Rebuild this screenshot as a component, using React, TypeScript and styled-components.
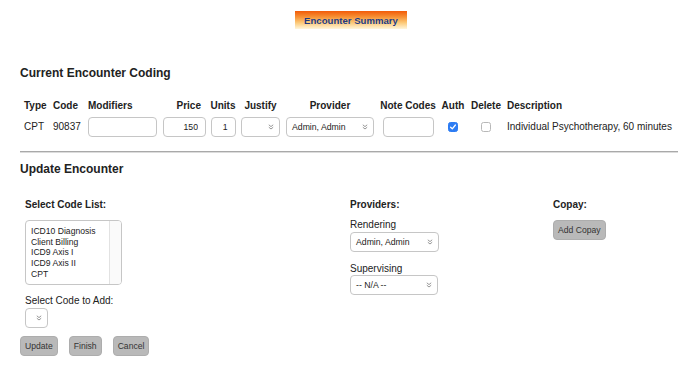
import React from "react";
import styled, { createGlobalStyle } from "styled-components";

const GlobalStyle = createGlobalStyle`
  html, body { margin: 0; padding: 0; background: #fff; }
  body { font-family: "Liberation Sans", Arial, sans-serif; color: #222; }
  * { box-sizing: border-box; }
`;

const Page = styled.div`
  width: 700px;
  padding: 0 20px 0 20px;
`;

const BannerRow = styled.div`
  display: flex;
  justify-content: center;
  padding-top: 11px;
  padding-left: 2px;
`;

const Banner = styled.div`
  height: 18px;
  width: 112px;
  display: flex;
  align-items: center;
  justify-content: center;
  font-size: 9.6px;
  font-weight: bold;
  color: #22397e;
  background: linear-gradient(#f25a08 0%, #f79438 35%, #fcc978 65%, #fff6dc 100%);
  text-shadow: 0 0 1px rgba(255, 255, 255, 0.4);
`;

const SectionTitle = styled.h2<{ $top: number }>`
  margin: ${(p) => p.$top}px 0 0 0;
  font-size: 12px;
  line-height: 14px;
  font-weight: bold;
  color: #222;
`;

const CodingGrid = styled.div`
  margin: 20px 0 0 4px;
  display: grid;
  grid-template-columns: 29px 35px 72px 48px 30px 45px 94px 62px 28px 38px auto;
  grid-template-rows: 12px 20px;
  row-gap: 5px;
  align-items: center;
  font-size: 10px;
`;

const HeadCell = styled.div<{ $align?: string; $pr?: number; $pl?: number }>`
  font-weight: bold;
  line-height: 12px;
  white-space: nowrap;
  text-align: ${(p) => p.$align || "left"};
  padding-right: ${(p) => p.$pr || 0}px;
  padding-left: ${(p) => p.$pl || 0}px;
`;

const Cell = styled.div<{ $justify?: string; $pl?: number }>`
  display: flex;
  align-items: center;
  justify-content: ${(p) => p.$justify || "flex-start"};
  padding-left: ${(p) => p.$pl || 0}px;
  white-space: nowrap;
  line-height: 12px;
`;

const TextBox = styled.input<{ $w: number; $right?: boolean; $mr?: number }>`
  width: ${(p) => p.$w}px;
  height: 20px;
  margin: 0 ${(p) => p.$mr || 0}px 0 0;
  border: 1px solid #c6c6c6;
  border-radius: 4px;
  background: #fff;
  font-family: "Liberation Sans", Arial, sans-serif;
  font-size: 8.7px;
  color: #222;
  padding: 0 ${(p) => (p.$right ? 7 : 5)}px 0 5px;
  text-align: ${(p) => (p.$right ? "right" : "left")};
  outline: none;
`;

const SelectBox = styled.div<{ $w: number }>`
  width: ${(p) => p.$w}px;
  height: 20px;
  border: 1px solid #c6c6c6;
  border-radius: 4px;
  background: #fff;
  display: flex;
  align-items: center;
  justify-content: space-between;
  padding: 0 5px 0 5px;
  font-size: 8.7px;
  color: #222;
  white-space: nowrap;
`;

const Chevrons = () => (
  <svg width="6" height="6" viewBox="0 0 6 6" style={{ flex: "none" }}>
    <path
      d="M0.8 0.8 L3 2.6 L5.2 0.8 M0.8 3.2 L3 5 L5.2 3.2"
      fill="none"
      stroke="#8a8a8a"
      strokeWidth="0.9"
    />
  </svg>
);

const Select = ({ w, value }: { w: number; value?: string }) => (
  <SelectBox $w={w}>
    <span>{value || ""}</span>
    <Chevrons />
  </SelectBox>
);

const Check = styled.div<{ $checked?: boolean }>`
  width: 10px;
  height: 10px;
  border-radius: 2.5px;
  display: flex;
  align-items: center;
  justify-content: center;
  background: ${(p) => (p.$checked ? "#2d7cf3" : "#fff")};
  border: 1px solid ${(p) => (p.$checked ? "#2d7cf3" : "#b8b8b8")};
`;

const Divider = styled.hr`
  margin: 14px 2px 0 0;
  border: none;
  border-top: 1px solid #a9a9a9;
  border-bottom: 1px solid #dcdcdc;
  height: 0;
`;

const UpdateGrid = styled.div`
  margin: 23px 0 0 5px;
  display: grid;
  grid-template-columns: 325px 203px auto;
  font-size: 10px;
`;

const Column = styled.div`
  display: flex;
  flex-direction: column;
  align-items: flex-start;
`;

const ColLabel = styled.div`
  font-weight: bold;
  line-height: 12px;
  font-size: 10px;
`;

const FieldLabel = styled.div<{ $top: number }>`
  margin-top: ${(p) => p.$top}px;
  line-height: 12px;
  font-size: 10px;
`;

const Spacer = styled.div<{ $h: number }>`
  height: ${(p) => p.$h}px;
  flex: none;
`;

const ListBox = styled.div`
  margin-top: 9px;
  width: 97px;
  height: 65px;
  border: 1px solid #c6c6c6;
  border-radius: 4px;
  display: flex;
  overflow: hidden;
  background: #fff;
`;

const ListItems = styled.div`
  flex: 1;
  padding: 5px 0 0 5px;
  font-size: 8.6px;
  line-height: 10.7px;
  color: #222;
`;

const ScrollTrack = styled.div`
  width: 12px;
  border-left: 1px solid #e2e2e2;
  background: #fafafa;
`;

const ButtonRow = styled.div`
  margin-top: 8px;
  display: flex;
  gap: 11px;
`;

const Button = styled.button`
  height: 20px;
  padding: 0 4px;
  border: 1px solid #adadad;
  border-radius: 4px;
  background: #b9b9b9;
  font-family: "Liberation Sans", Arial, sans-serif;
  font-size: 8.6px;
  color: #333;
  cursor: pointer;
`;

const codeLists = ["ICD10 Diagnosis", "Client Billing", "ICD9 Axis I", "ICD9 Axis II", "CPT"];

export default function App() {
  return (
    <>
      <GlobalStyle />
      <Page>
        <BannerRow>
          <Banner>Encounter Summary</Banner>
        </BannerRow>

        <SectionTitle $top={37}>Current Encounter Coding</SectionTitle>

        <CodingGrid>
          <HeadCell>Type</HeadCell>
          <HeadCell>Code</HeadCell>
          <HeadCell>Modifiers</HeadCell>
          <HeadCell $align="right" $pr={7}>Price</HeadCell>
          <HeadCell $align="center">Units</HeadCell>
          <HeadCell $align="center">Justify</HeadCell>
          <HeadCell $align="center">Provider</HeadCell>
          <HeadCell $align="center">Note Codes</HeadCell>
          <HeadCell $align="center">Auth</HeadCell>
          <HeadCell $align="center">Delete</HeadCell>
          <HeadCell $pl={2}>Description</HeadCell>

          <Cell>CPT</Cell>
          <Cell>90837</Cell>
          <Cell>
            <TextBox $w={69} defaultValue="" />
          </Cell>
          <Cell $justify="flex-end">
            <TextBox $w={43} $right $mr={2} defaultValue="150" />
          </Cell>
          <Cell $justify="center">
            <TextBox $w={25} $right defaultValue="1" />
          </Cell>
          <Cell $justify="center">
            <Select w={39} />
          </Cell>
          <Cell $justify="center">
            <Select w={88} value="Admin, Admin" />
          </Cell>
          <Cell $justify="center">
            <TextBox $w={51} defaultValue="" />
          </Cell>
          <Cell $justify="center">
            <Check $checked>
              <svg width="8" height="8" viewBox="0 0 8 8">
                <path d="M1.6 4.2 L3.3 5.8 L6.4 2" fill="none" stroke="#fff" strokeWidth="1.3" strokeLinecap="round" strokeLinejoin="round" />
              </svg>
            </Check>
          </Cell>
          <Cell $justify="center">
            <Check />
          </Cell>
          <Cell $pl={2}>Individual Psychotherapy, 60 minutes</Cell>
        </CodingGrid>

        <Divider />

        <SectionTitle $top={9}>Update Encounter</SectionTitle>

        <UpdateGrid>
          <Column>
            <ColLabel>Select Code List:</ColLabel>
            <ListBox>
              <ListItems>
                {codeLists.map((c) => (
                  <div key={c}>{c}</div>
                ))}
              </ListItems>
              <ScrollTrack />
            </ListBox>
            <FieldLabel $top={10}>Select Code to Add:</FieldLabel>
            <Spacer $h={1} />
            <Select w={23} />
          </Column>
          <Column>
            <ColLabel>Providers:</ColLabel>
            <FieldLabel $top={8}>Rendering</FieldLabel>
            <Spacer $h={1} />
            <Select w={89} value="Admin, Admin" />
            <FieldLabel $top={11}>Supervising</FieldLabel>
            <Select w={88} value="-- N/A --" />
          </Column>
          <Column>
            <ColLabel>Copay:</ColLabel>
            <Spacer $h={9} />
            <Button>Add Copay</Button>
          </Column>
        </UpdateGrid>

        <ButtonRow>
          <Button>Update</Button>
          <Button>Finish</Button>
          <Button>Cancel</Button>
        </ButtonRow>
      </Page>
    </>
  );
}
